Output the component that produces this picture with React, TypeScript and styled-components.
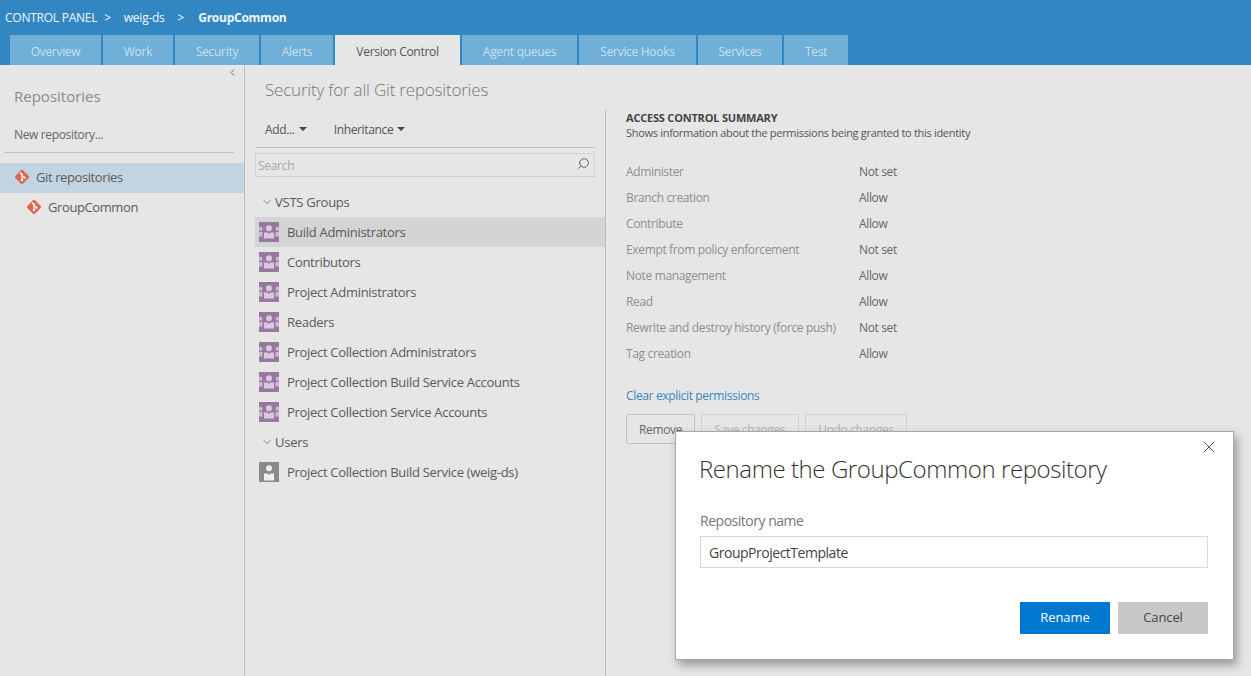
import styled, { createGlobalStyle } from "styled-components";
import { ChevronDown, ChevronLeft, Search, X } from "lucide-react";

const GlobalStyle = createGlobalStyle`
    html, body {
        margin: 0;
        padding: 0;
        height: 100%;
        background: #e6e6e6;
        font-family: "Open Sans", "Noto Sans", sans-serif;
        font-size: 12px;
        color: #555;
    }
    * { box-sizing: border-box; }
`;

const Page = styled.div`
    position: relative;
    width: 1251px;
    height: 676px;
    overflow: hidden;
    display: flex;
    flex-direction: column;
`;

const Header = styled.header`
    background: #3287c2;
    height: 65px;
    flex: none;
    display: flex;
    flex-direction: column;
`;

const Crumbs = styled.div`
    height: 35px;
    padding-left: 5px;
    display: flex;
    align-items: center;
    color: #f0f6fb;
    font-size: 12px;
    letter-spacing: -0.25px;
`;

const Crumb = styled.span<{ $strong?: boolean; $gap: number }>`
    margin-right: ${(p) => p.$gap}px;
    font-weight: ${(p) => (p.$strong ? 700 : 400)};
`;

const Tabs = styled.nav`
    height: 30px;
    padding-left: 10px;
    display: flex;
    gap: 2px;
`;

const Tab = styled.div<{ $width: number; $active?: boolean }>`
    width: ${(p) => p.$width}px;
    padding-top: 2px;
    display: flex;
    align-items: center;
    justify-content: center;
    font-size: 12px;
    letter-spacing: -0.3px;
    background: ${(p) => (p.$active ? "#e6e6e6" : "#70afd7")};
    color: ${(p) => (p.$active ? "#555" : "#c9e0ef")};
`;

const Body = styled.div`
    flex: 1;
    display: flex;
    min-height: 0;
`;

const Sidebar = styled.aside`
    width: 245px;
    flex: none;
    border-right: 1px solid #bdbdbd;
    display: flex;
    flex-direction: column;
`;

const CollapseRow = styled.div`
    height: 15px;
    padding-right: 6px;
    display: flex;
    justify-content: flex-end;
    align-items: center;
    color: #666;
`;

const SidebarTitle = styled.h2`
    margin: 5px 0 0 14px;
    font-size: 15px;
    line-height: 22px;
    font-weight: 400;
    color: #8a8a8a;
    letter-spacing: 0;
`;

const NewRepo = styled.div`
    margin: 19px 10px 10px 4px;
    padding: 0 0 9px 10px;
    border-bottom: 1px solid #c2c2c2;
    line-height: 17px;
    letter-spacing: -0.35px;
    color: #666;
`;

const RepoRow = styled.div<{ $indent: number; $selected?: boolean }>`
    height: 30px;
    padding: 0 0 2px ${(p) => p.$indent}px;
    display: flex;
    align-items: center;
    gap: 6px;
    font-size: 13px;
    letter-spacing: -0.4px;
    color: #5a5a5a;
    background: ${(p) => (p.$selected ? "#c2d3e2" : "transparent")};
`;

const Main = styled.main`
    flex: 1;
    display: flex;
    flex-direction: column;
`;

const MainTitle = styled.h1`
    margin: 0;
    height: 45px;
    padding: 13px 0 0 20px;
    font-size: 17px;
    line-height: 24px;
    font-weight: 300;
    letter-spacing: -0.2px;
    color: #777;
`;

const Columns = styled.div`
    flex: 1;
    display: flex;
`;

const GroupsPane = styled.section`
    width: 361px;
    flex: none;
    border-right: 1px solid #bdbdbd;
    padding-left: 10px;
`;

const Toolbar = styled.div`
    width: 340px;
    height: 38px;
    padding: 10px 0 0 10px;
    border-bottom: 1px solid #c2c2c2;
    display: flex;
    gap: 27px;
`;

const Menu = styled.span`
    display: flex;
    align-items: center;
    height: 18px;
    gap: 4px;
    letter-spacing: -0.35px;
    color: #555;
    &::after {
        content: "";
        border-left: 4px solid transparent;
        border-right: 4px solid transparent;
        border-top: 4px solid #444;
    }
`;

const SearchBox = styled.div`
    width: 340px;
    height: 24px;
    margin-top: 5px;
    padding: 0 4px 0 2px;
    border: 1px solid #d0d0d0;
    display: flex;
    align-items: center;
    justify-content: space-between;
    color: #a8a8a8;
    letter-spacing: -0.3px;
`;

const SearchGlass = styled(Search)`
    margin-top: -3px;
    color: #555;
    transform: scaleX(-1);
`;

const GroupHeading = styled.div<{ $top: number }>`
    height: 30px;
    margin-top: ${(p) => p.$top}px;
    padding-left: 6px;
    display: flex;
    align-items: center;
    gap: 2px;
    font-size: 13px;
    letter-spacing: -0.25px;
    color: #5a5a5a;
`;

const GroupRow = styled.div<{ $selected?: boolean }>`
    height: 30px;
    padding-left: 4px;
    display: flex;
    align-items: center;
    gap: 8px;
    font-size: 13px;
    letter-spacing: -0.3px;
    color: #5a5a5a;
    background: ${(p) => (p.$selected ? "#d4d4d4" : "transparent")};
`;

const SummaryPane = styled.section`
    flex: 1;
    padding: 0 0 0 20px;
`;

const SummaryTitle = styled.h3`
    margin: 0;
    font-size: 11px;
    line-height: 15px;
    font-weight: 700;
    letter-spacing: -0.2px;
    color: #444;
`;

const SummaryNote = styled.p`
    margin: 0 0 18px;
    font-size: 11px;
    line-height: 15px;
    letter-spacing: -0.3px;
    color: #555;
`;

const Permission = styled.div`
    height: 26px;
    display: grid;
    grid-template-columns: 233px 1fr;
    align-items: center;
    letter-spacing: -0.35px;
    color: #8e8e8e;
`;

const PermissionValue = styled.span`
    color: #666;
`;

const ClearLink = styled.a`
    display: block;
    margin-top: 21px;
    line-height: 18px;
    letter-spacing: -0.35px;
    color: #3a87bd;
`;

const ActionRow = styled.div`
    margin-top: 9px;
    display: flex;
    gap: 6px;
`;

const ActionButton = styled.button<{ $width: number; $disabled?: boolean }>`
    width: ${(p) => p.$width}px;
    height: 30px;
    padding: 0;
    border: 1px solid ${(p) => (p.$disabled ? "#d2d2d2" : "#c2c2c2")};
    border-radius: 2px;
    background: transparent;
    font: inherit;
    letter-spacing: -0.35px;
    color: ${(p) => (p.$disabled ? "#b4b4b4" : "#666")};
`;

const Dialog = styled.div`
    position: absolute;
    left: 675px;
    top: 431px;
    width: 559px;
    height: 229px;
    padding: 22px 25px 0 24px;
    background: #fff;
    border: 1px solid #a8a8a8;
    box-shadow: 3px 5px 9px rgba(0, 0, 0, 0.35);
`;

const CloseButton = styled.span`
    position: absolute;
    top: 5px;
    right: 14px;
    display: flex;
    color: #333;
`;

const DialogTitle = styled.h2`
    margin: 0 0 0 -1px;
    font-size: 24px;
    line-height: 30px;
    font-weight: 300;
    letter-spacing: -0.42px;
    color: #333;
`;

const FieldLabel = styled.label`
    display: block;
    margin-top: 28px;
    font-size: 14px;
    line-height: 18px;
    letter-spacing: -0.48px;
    color: #777;
`;

const NameInput = styled.div`
    height: 32px;
    margin-top: 6px;
    padding: 0 0 0 8px;
    border: 1px solid #d8d8d8;
    display: flex;
    align-items: center;
    font-size: 14px;
    letter-spacing: -0.48px;
    color: #444;
`;

const DialogActions = styled.div`
    margin-top: 34px;
    display: flex;
    justify-content: flex-end;
    gap: 8px;
`;

const DialogButton = styled.button<{ $primary?: boolean }>`
    width: 90px;
    height: 32px;
    padding: 0 0 2px;
    border: 0;
    font: inherit;
    font-size: 13px;
    letter-spacing: -0.1px;
    background: ${(p) => (p.$primary ? "#0078d0" : "#c8c8c8")};
    color: ${(p) => (p.$primary ? "#fff" : "#444")};
`;

function GitIcon() {
    return (
        <svg width="16" height="16" viewBox="0 0 16 16">
            <rect x="2.6" y="2.6" width="10.8" height="10.8" rx="1.4" fill="#e3654f" transform="rotate(45 8 8)" />
            <path d="M6 3.5 8 5.7V11" stroke="#fff" strokeWidth="1.2" fill="none" />
            <path d="M8 6.5 10.400 8.600" stroke="#fff" strokeWidth="1.2" fill="none" />
            <circle cx="8" cy="5.800" r="1.2" fill="#fff" />
            <circle cx="8" cy="11" r="1.2" fill="#fff" />
            <circle cx="10.400" cy="8.600" r="1.2" fill="#fff" />
        </svg>
    );
}

function GroupIcon() {
    return (
        <svg width="20" height="20" viewBox="0 0 20 20">
            <rect width="20" height="20" fill="#98799e" />
            <circle cx="10" cy="6.300" r="3" fill="#dcc8e0" />
            <path d="M5 10.500h3.500L10 12l1.500-1.500H15v6H5z" fill="#dcc8e0" />
            <circle cx="1.500" cy="6.800" r="2" fill="#dcc8e0" opacity="0.8" />
            <circle cx="18.500" cy="6.800" r="2" fill="#dcc8e0" opacity="0.8" />
            <path d="M0 10h3.500v4.500H0zM16.500 10H20v4.500h-3.500z" fill="#dcc8e0" opacity="0.8" />
        </svg>
    );
}

function UserIcon() {
    return (
        <svg width="20" height="20" viewBox="0 0 20 20">
            <rect width="20" height="20" fill="#8a8a8a" />
            <circle cx="10" cy="6.300" r="3" fill="#efefef" />
            <path d="M5 11.500h3.500L10 13l1.500-1.500H15v7H5z" fill="#efefef" />
        </svg>
    );
}

const tabs = [
    { label: "Overview", width: 91 },
    { label: "Work", width: 70 },
    { label: "Security", width: 84 },
    { label: "Alerts", width: 72 },
    { label: "Version Control", width: 125, active: true },
    { label: "Agent queues", width: 115 },
    { label: "Service Hooks", width: 117 },
    { label: "Services", width: 84 },
    { label: "Test", width: 64 },
];

const groups = [
    "Build Administrators",
    "Contributors",
    "Project Administrators",
    "Readers",
    "Project Collection Administrators",
    "Project Collection Build Service Accounts",
    "Project Collection Service Accounts",
];

const permissions = [
    ["Administer", "Not set"],
    ["Branch creation", "Allow"],
    ["Contribute", "Allow"],
    ["Exempt from policy enforcement", "Not set"],
    ["Note management", "Allow"],
    ["Read", "Allow"],
    ["Rewrite and destroy history (force push)", "Not set"],
    ["Tag creation", "Allow"],
];

function App() {
    return (
        <Page>
            <GlobalStyle />
            <Header>
                <Crumbs>
                    <Crumb $gap={7}>CONTROL PANEL</Crumb>
                    <Crumb $gap={13}>&gt;</Crumb>
                    <Crumb $gap={13}>weig-ds</Crumb>
                    <Crumb $gap={14}>&gt;</Crumb>
                    <Crumb $gap={0} $strong>GroupCommon</Crumb>
                </Crumbs>
                <Tabs>
                    {tabs.map((tab) => (
                        <Tab key={tab.label} $width={tab.width} $active={tab.active}>
                            {tab.label}
                        </Tab>
                    ))}
                </Tabs>
            </Header>
            <Body>
                <Sidebar>
                    <CollapseRow>
                        <ChevronLeft size={11} strokeWidth={2} />
                    </CollapseRow>
                    <SidebarTitle>Repositories</SidebarTitle>
                    <NewRepo>New repository...</NewRepo>
                    <RepoRow $indent={14} $selected>
                        <GitIcon />
                        Git repositories
                    </RepoRow>
                    <RepoRow $indent={26}>
                        <GitIcon />
                        GroupCommon
                    </RepoRow>
                </Sidebar>
                <Main>
                    <MainTitle>Security for all Git repositories</MainTitle>
                    <Columns>
                        <GroupsPane>
                            <Toolbar>
                                <Menu>Add...</Menu>
                                <Menu>Inheritance</Menu>
                            </Toolbar>
                            <SearchBox>
                                Search
                                <SearchGlass size={13} strokeWidth={1.6} />
                            </SearchBox>
                            <GroupHeading $top={10}>
                                <ChevronDown size={12} strokeWidth={1.5} />
                                VSTS Groups
                            </GroupHeading>
                            {groups.map((name, i) => (
                                <GroupRow key={name} $selected={i === 0}>
                                    <GroupIcon />
                                    {name}
                                </GroupRow>
                            ))}
                            <GroupHeading $top={0}>
                                <ChevronDown size={12} strokeWidth={1.5} />
                                Users
                            </GroupHeading>
                            <GroupRow>
                                <UserIcon />
                                Project Collection Build Service (weig-ds)
                            </GroupRow>
                        </GroupsPane>
                        <SummaryPane>
                            <SummaryTitle>ACCESS CONTROL SUMMARY</SummaryTitle>
                            <SummaryNote>Shows information about the permissions being granted to this identity</SummaryNote>
                            {permissions.map(([name, value]) => (
                                <Permission key={name}>
                                    <span>{name}</span>
                                    <PermissionValue>{value}</PermissionValue>
                                </Permission>
                            ))}
                            <ClearLink>Clear explicit permissions</ClearLink>
                            <ActionRow>
                                <ActionButton $width={69}>Remove</ActionButton>
                                <ActionButton $width={98} $disabled>Save changes</ActionButton>
                                <ActionButton $width={102} $disabled>Undo changes</ActionButton>
                            </ActionRow>
                        </SummaryPane>
                    </Columns>
                </Main>
            </Body>
            <Dialog>
                <CloseButton>
                    <X size={20} strokeWidth={1} />
                </CloseButton>
                <DialogTitle>Rename the GroupCommon repository</DialogTitle>
                <FieldLabel>Repository name</FieldLabel>
                <NameInput>GroupProjectTemplate</NameInput>
                <DialogActions>
                    <DialogButton $primary>Rename</DialogButton>
                    <DialogButton>Cancel</DialogButton>
                </DialogActions>
            </Dialog>
        </Page>
    );
}

export default App;
